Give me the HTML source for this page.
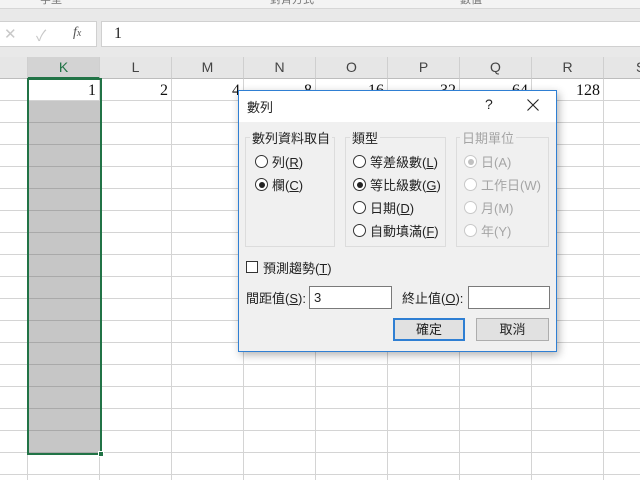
<!DOCTYPE html>
<html><head><meta charset="utf-8"><style>
*{margin:0;padding:0;box-sizing:border-box}
body{width:640px;height:480px;overflow:hidden;background:#fff;position:relative;font-family:"Liberation Sans","Noto Sans CJK TC",sans-serif;font-size:12px;color:#222}
.a{position:absolute}
.grid{left:0;top:79px;width:640px;height:401px;
background-image:linear-gradient(to bottom,transparent 21px,#d4d4d4 21px,#d4d4d4 22px),linear-gradient(to right,transparent 27px,#d4d4d4 27px,#d4d4d4 28px,transparent 28px);
background-size:640px 22px,72px 401px;background-position:0 0,0 0}
.hd{top:57px;height:22px;width:72px;text-align:center;line-height:20px;font-size:14px;color:#444;background:#e6e6e6;border-right:1px solid #cfcfcf;border-bottom:1px solid #bdbdbd}
.v{top:79px;height:22px;width:72px;text-align:right;padding-right:4px;line-height:24px;font-family:"Liberation Serif",serif;font-size:16px;color:#111}
.dlg{left:238px;top:90px;width:319px;height:262px;background:#f0f0f0;border:1px solid #2f7fd3;box-shadow:2px 3px 8px rgba(0,0,0,.3)}
.grp{border:1px solid #dcdcdc;}
.gt{background:#f0f0f0;padding:0 2px;font-size:13px}
.r{width:13px;height:13px;border:1px solid #333;border-radius:50%;background:#fff}
.rl{font-size:13px}
.dis .r{border-color:#c8c8c8}
.dis{color:#a5a5a5}
.btn{height:23px;border:1px solid #adadad;background:#e1e1e1;text-align:center;line-height:21px;font-size:13px}
.inp{height:23px;background:#fff;border:1px solid #7a7a7a;font-size:13px;padding-left:4px;line-height:21px}
u{text-decoration:underline}
</style></head><body>
<div class="a" style="left:0;top:0;width:640px;height:47px;background:#e9e9e9"></div>
<div class="a" style="left:0;top:0;width:640px;height:9px;background:#f3f3f3;border-bottom:1px solid #d6d6d6;font-size:11px;color:#777;overflow:hidden;line-height:4px">
<span class="a" style="left:40px;top:-2px">字型</span><span class="a" style="left:270px;top:-2px">對齊方式</span><span class="a" style="left:460px;top:-2px">數值</span></div>
<div class="a" style="left:0;top:21px;width:97px;height:26px;background:#fff;border:1px solid #d0d0d0;border-left:none"></div>
<div class="a" style="left:4px;top:25px;color:#c8c8c8;font-size:15px">✕</div>
<div class="a" style="left:36px;top:25px;color:#c8c8c8;font-size:15px">✓</div>
<div class="a" style="left:73px;top:25px;color:#555;font-family:'Liberation Serif',serif;font-style:italic;font-size:14px">f<span style="font-size:10px">x</span></div>
<div class="a" style="left:101px;top:21px;width:539px;height:26px;background:#fff;border:1px solid #d0d0d0;border-right:none;font-family:'Liberation Serif',serif;font-size:16px;padding:3px 12px">1</div>
<div class="a" style="left:0;top:47px;width:640px;height:10px;background:#e9e9e9"></div>
<div class="a hd" style="left:0;width:28px"></div>
<div class="a hd" style="left:28px;background:#d3d3d3;border-bottom:2px solid #217346;color:#217346">K</div>
<div class="a hd" style="left:100px">L</div><div class="a hd" style="left:172px">M</div><div class="a hd" style="left:244px">N</div><div class="a hd" style="left:316px">O</div><div class="a hd" style="left:388px">P</div><div class="a hd" style="left:460px">Q</div><div class="a hd" style="left:532px">R</div><div class="a hd" style="left:604px;text-align:left;padding-left:32px">S</div>
<div class="a grid"></div>
<div class="a" style="left:28px;top:101px;width:72px;height:352px;background:#c6c6c6;background-image:linear-gradient(to bottom,transparent 21px,#a9a9a9 21px,#a9a9a9 22px);background-size:72px 22px"></div>
<div class="a" style="left:27px;top:78px;width:75px;height:377px;border:2px solid #217346"></div>
<div class="a" style="left:98px;top:451px;width:6px;height:6px;background:#217346;border:1px solid #fff"></div>
<div class="a v" style="left:28px">1</div><div class="a v" style="left:100px">2</div><div class="a v" style="left:172px">4</div><div class="a v" style="left:244px">8</div><div class="a v" style="left:316px">16</div><div class="a v" style="left:388px">32</div><div class="a v" style="left:460px">64</div><div class="a v" style="left:532px">128</div>

<div class="a dlg">
<div class="a" style="left:0;top:0;width:317px;height:31px;background:#fff"></div>
<div class="a" style="left:8px;top:6px;font-size:13px">數列</div>
<div class="a" style="left:246px;top:5px;font-size:14px">?</div>
<svg class="a" style="left:288px;top:8px" width="12" height="12"><path d="M0.5 0.5L11.5 11.5M11.5 0.5L0.5 11.5" stroke="#222" stroke-width="1.1"/></svg>

<div class="a grp" style="left:6px;top:46px;width:90px;height:110px"></div>
<div class="a gt" style="left:11px;top:37px">數列資料取自</div>
<div class="a r" style="left:16px;top:64px"></div><div class="a rl" style="left:33px;top:61px">列(<u>R</u>)</div>
<div class="a r" style="left:16px;top:87px"><div style="margin:2.5px;width:6px;height:6px;border-radius:50%;background:#222"></div></div><div class="a rl" style="left:33px;top:84px">欄(<u>C</u>)</div>

<div class="a grp" style="left:106px;top:46px;width:101px;height:110px"></div>
<div class="a gt" style="left:111px;top:37px">類型</div>
<div class="a r" style="left:114px;top:64px"></div><div class="a rl" style="left:131px;top:61px">等差級數(<u>L</u>)</div>
<div class="a r" style="left:114px;top:87px"><div style="margin:2.5px;width:6px;height:6px;border-radius:50%;background:#222"></div></div><div class="a rl" style="left:131px;top:84px">等比級數(<u>G</u>)</div>
<div class="a r" style="left:114px;top:110px"></div><div class="a rl" style="left:131px;top:107px">日期(<u>D</u>)</div>
<div class="a r" style="left:114px;top:133px"></div><div class="a rl" style="left:131px;top:130px">自動填滿(<u>F</u>)</div>

<div class="a grp" style="left:217px;top:46px;width:93px;height:110px"></div>
<div class="dis">
<div class="a gt" style="left:221px;top:37px">日期單位</div>
<div class="a r" style="left:225px;top:64px"><div style="margin:2.5px;width:6px;height:6px;border-radius:50%;background:#c0c0c0"></div></div><div class="a rl" style="left:242px;top:61px">日(A)</div>
<div class="a r" style="left:225px;top:87px"></div><div class="a rl" style="left:242px;top:84px">工作日(W)</div>
<div class="a r" style="left:225px;top:110px"></div><div class="a rl" style="left:242px;top:107px">月(M)</div>
<div class="a r" style="left:225px;top:133px"></div><div class="a rl" style="left:242px;top:130px">年(Y)</div>
</div>

<div class="a" style="left:7px;top:170px;width:12px;height:12px;border:1px solid #333;background:#fff"></div>
<div class="a rl" style="left:24px;top:167px">預測趨勢(<u>T</u>)</div>
<div class="a rl" style="left:7px;top:197px">間距值(<u>S</u>):</div>
<div class="a inp" style="left:70px;top:195px;width:83px">3</div>
<div class="a rl" style="left:163px;top:197px">終止值(<u>O</u>):</div>
<div class="a inp" style="left:229px;top:195px;width:82px"></div>
<div class="a btn" style="left:154px;top:227px;width:72px;border:2px solid #2f7fd3;line-height:19px">確定</div>
<div class="a btn" style="left:237px;top:227px;width:73px">取消</div>
</div>
</body></html>
